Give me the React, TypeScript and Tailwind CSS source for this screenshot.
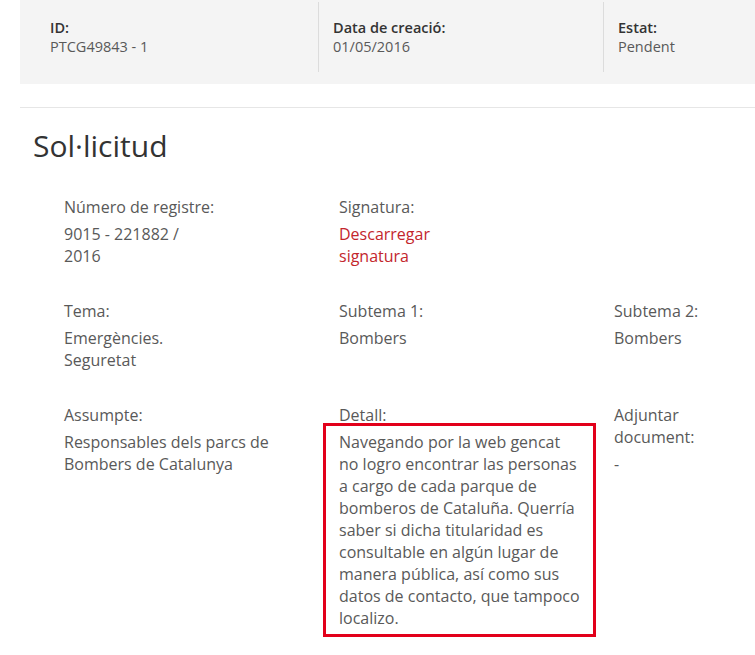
import React from "react";

type Field = {
  label: string;
  value: React.ReactNode;
  wide?: boolean;
  highlight?: boolean;
};

const rows: Field[][] = [
  [
    { label: "Número de registre:", value: "9015 - 221882 / 2016" },
    {
      label: "Signatura:",
      value: <a className="text-[#c3262c]" href="#">Descarregar signatura</a>,
    },
  ],
  [
    { label: "Tema:", value: "Emergències. Seguretat" },
    { label: "Subtema 1:", value: "Bombers" },
    { label: "Subtema 2:", value: "Bombers" },
  ],
  [
    { label: "Assumpte:", value: "Responsables dels parcs de Bombers de Catalunya", wide: true },
    {
      label: "Detall:",
      wide: true,
      highlight: true,
      value:
        "Navegando por la web gencat no logro encontrar las personas a cargo de cada parque de bomberos de Cataluña. Querría saber si dicha titularidad es consultable en algún lugar de manera pública, así como sus datos de contacto, que tampoco localizo.",
    },
    { label: "Adjuntar document:", value: "-" },
  ],
];

function SummaryCell({ label, value, first }: { label: string; value: string; first?: boolean }) {
  return (
    <div className={first ? "w-[298px] h-[70px] pl-[30px] pt-[16px]" : "h-[70px] pl-[14px] pt-[16px] border-l border-[#dcdcdc]"}>
      <p className="text-[14.5px] leading-[19px] font-semibold text-[#333]">{label}</p>
      <p className="text-[14.5px] leading-[19px] text-[#595959]">{value}</p>
    </div>
  );
}

function FieldCell({ field, col }: { field: Field; col: number }) {
  const width = col === 2 ? "max-w-[125px]" : field.wide ? "w-[241px]" : "w-[140px]";
  return (
    <div className="w-[275px] shrink-0">
      <p className={col === 2 ? "text-[16px] leading-[22px] text-[#595959] max-w-[125px]" : "text-[16px] leading-[22px] text-[#595959]"}>
        {field.label}
      </p>
      <div className={`relative mt-[5px] text-[16px] leading-[22px] text-[#595959] ${width}`}>
        {field.highlight && (
          <div className="absolute -left-[16px] -top-[8px] w-[273px] h-[214px] border-[3px] border-[#e2001a]" />
        )}
        <p className="relative">{field.value}</p>
      </div>
    </div>
  );
}

export default function App() {
  return (
    <div className="w-[755px] h-[655px] overflow-hidden bg-white font-['Open_Sans',sans-serif]">
      {/* Summary band */}
      <div className="ml-[20px] h-[84px] pt-[2px] bg-[#f4f4f4] flex">
        <SummaryCell first label="ID:" value="PTCG49843 - 1" />
        <div className="w-[285px]">
          <SummaryCell label="Data de creació:" value="01/05/2016" />
        </div>
        <div className="flex-1">
          <SummaryCell label="Estat:" value="Pendent" />
        </div>
      </div>

      <div className="ml-[20px] mt-[23px] h-px bg-[#e6e6e6]" />

      <h2 className="ml-[33px] mt-[18px] text-[30px] leading-[40px] text-[#333]">Sol·licitud</h2>

      <div className="pl-[64px] mt-[30px] flex flex-col gap-[33px]">
        {rows.map((row, i) => (
          <div key={i} className="flex">
            {row.map((f, j) => (
              <FieldCell key={f.label} field={f} col={j} />
            ))}
          </div>
        ))}
      </div>
    </div>
  );
}
